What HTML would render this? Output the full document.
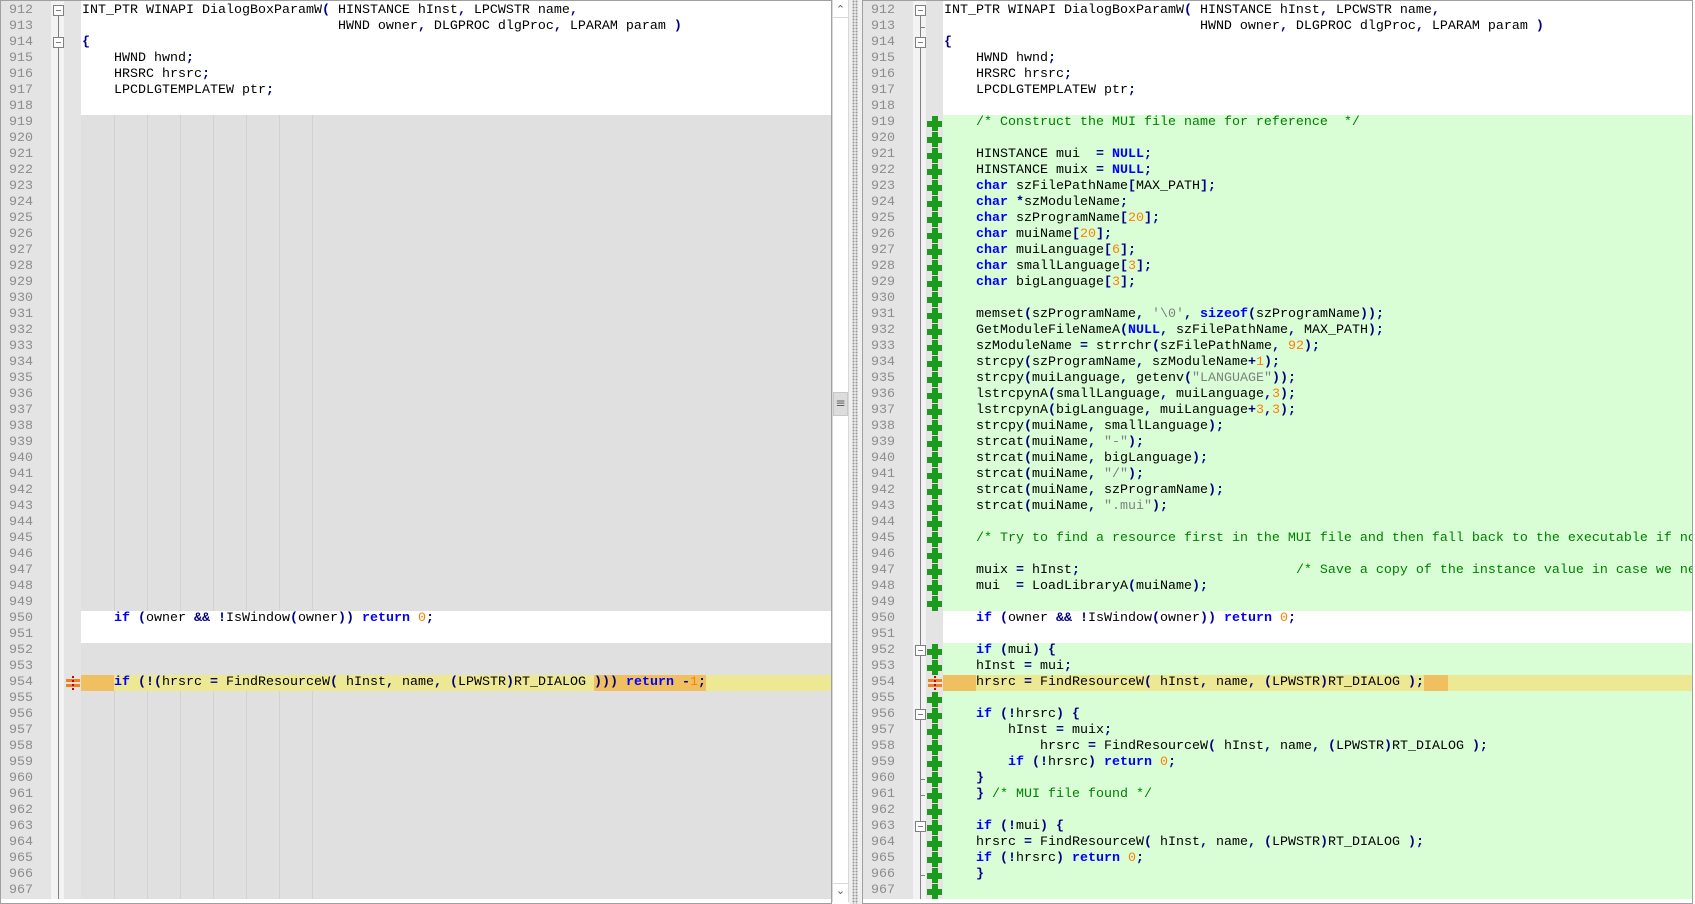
<!DOCTYPE html>
<html><head><meta charset="utf-8"><style>
*{margin:0;padding:0;box-sizing:border-box}
body{width:1695px;height:904px;overflow:hidden;background:#fff;position:relative;font-family:"Liberation Mono",monospace;font-size:13.33px}
.a{position:absolute}
pre{position:absolute;font-family:"Liberation Mono",monospace;font-size:13.33px;line-height:16px;white-space:pre;color:#000}
.num{color:#8c8c8c;text-align:right}
.k{color:#0000ff;font-weight:bold}
.n{color:#ff8000}
.s{color:#808080}
.c{color:#008000}
.o{color:#000080;font-weight:bold}
.p{position:absolute;width:15px;height:15px;background:linear-gradient(#1b9a1b,#1b9a1b) center/15px 6px no-repeat,linear-gradient(#1b9a1b,#1b9a1b) center/6px 15px no-repeat}
.fb{position:absolute;width:11px;height:11px;border:1px solid #808080;background:#fff}
.fb::after{content:"";position:absolute;left:2px;top:4px;width:5px;height:1px;background:#808080}
.guides{background:repeating-linear-gradient(90deg,transparent 0 32px,#c8c8c8 32px 33px)}
.mk{position:absolute;width:14px;height:14px}
.mk::before{content:"";position:absolute;left:0;top:3px;width:14px;height:3px;background:#f08020;box-shadow:0 5px 0 #f08020}
.mk::after{content:"";position:absolute;left:6px;top:0;width:2px;height:14px;background:repeating-linear-gradient(#d00000 0 2px,transparent 2px 4px)}
</style></head><body>

<!-- LEFT PANE -->
<div class="a" style="left:0;top:0;width:832px;height:904px;border:1px solid #a0a0a0;overflow:hidden;background:#fff">
  <div class="a" style="left:0;top:0;width:50px;height:898px;background:#e4e4e4"></div>
  <div class="a" style="left:50px;top:0;width:13px;height:898px;background:#f3f3f3"></div>
  <div class="a" style="left:63px;top:0;width:17px;height:898px;background:#e4e4e4"></div>
  <div class="a" style="left:57px;top:8px;width:1px;height:890px;background:#808080"></div>
  <div class="fb" style="left:52px;top:4px"></div>
  <div class="fb" style="left:52px;top:36px"></div>
  <div class="a" style="left:80px;top:114px;width:752px;height:496px;background:#e0e0e0"></div>
  <div class="a" style="left:80px;top:642px;width:752px;height:32px;background:#e0e0e0"></div>
  <div class="a" style="left:80px;top:674px;width:752px;height:16px;background:#ede894"></div>
  <div class="a" style="left:80px;top:674px;width:33px;height:16px;background:#f0c060"></div>
  <div class="a" style="left:593px;top:674px;width:112px;height:16px;background:#f0c060"></div>
  <div class="a" style="left:80px;top:690px;width:752px;height:208px;background:#e0e0e0"></div>
  <div class="a guides" style="left:81px;top:114px;width:260px;height:496px;opacity:.6"></div>
  <div class="a guides" style="left:81px;top:690px;width:260px;height:208px;opacity:.6"></div>
  <div class="mk" style="left:65px;top:675px"></div>
<pre class="num" style="left:0;top:2px;width:32px">912
913
914
915
916
917
918
919
920
921
922
923
924
925
926
927
928
929
930
931
932
933
934
935
936
937
938
939
940
941
942
943
944
945
946
947
948
949
950
951
952
953
954
955
956
957
958
959
960
961
962
963
964
965
966
967</pre>
<pre style="left:81px;top:2px">INT_PTR WINAPI DialogBoxParamW<span class="o">(</span> HINSTANCE hInst<span class="o">,</span> LPCWSTR name<span class="o">,</span>
                                HWND owner<span class="o">,</span> DLGPROC dlgProc<span class="o">,</span> LPARAM param <span class="o">)</span>
<span class="o">{</span>
    HWND hwnd<span class="o">;</span>
    HRSRC hrsrc<span class="o">;</span>
    LPCDLGTEMPLATEW ptr<span class="o">;</span>
































    <span class="k">if</span> <span class="o">(</span>owner <span class="o">&amp;&amp;</span> <span class="o">!</span>IsWindow<span class="o">(</span>owner<span class="o">))</span> <span class="k">return</span> <span class="n">0</span><span class="o">;</span>



    <span class="k">if</span> <span class="o">(!(</span>hrsrc <span class="o">=</span> FindResourceW<span class="o">(</span> hInst<span class="o">,</span> name<span class="o">,</span> <span class="o">(</span>LPWSTR<span class="o">)</span>RT_DIALOG <span class="o">)))</span> <span class="k">return</span> <span class="o">-</span><span class="n">1</span><span class="o">;</span></pre>
</div>

<!-- vertical scrollbar -->
<div class="a" style="left:832px;top:0;width:17px;height:902px;background:#fff;border-left:1px solid #d8d8d8;border-right:1px solid #d8d8d8">
  <div class="a" style="left:0;top:0;width:15px;height:18px;border-bottom:1px solid #d8d8d8;color:#606060;font-size:11px;text-align:center;line-height:20px;font-family:'DejaVu Sans',sans-serif">&#8963;</div>
  <div class="a" style="left:0;top:392px;width:15px;height:24px;background:#dcdcdc;border:1px solid #c8c8c8;color:#606060;font-size:12px;text-align:center;line-height:21px;font-family:'DejaVu Sans',sans-serif">&#8801;</div>
  <div class="a" style="left:0;top:883px;width:15px;height:18px;border-top:1px solid #d8d8d8;color:#606060;font-size:11px;text-align:center;line-height:14px;font-family:'DejaVu Sans',sans-serif">&#8964;</div>
</div>
<!-- separator -->
<div class="a" style="left:849px;top:0;width:13px;height:904px;background:#f0f0f0"></div>
<div class="a" style="left:852px;top:0;width:6px;height:904px;background:radial-gradient(circle,#9a9a9a 0.9px,transparent 1.2px) 0 0/3px 3px"></div>

<!-- RIGHT PANE -->
<div class="a" style="left:862px;top:0;width:831px;height:904px;border:1px solid #a0a0a0;overflow:hidden;background:#fff">
  <div class="a" style="left:0;top:0;width:50px;height:898px;background:#e4e4e4"></div>
  <div class="a" style="left:50px;top:0;width:13px;height:898px;background:#f3f3f3"></div>
  <div class="a" style="left:63px;top:0;width:17px;height:898px;background:#e4e4e4"></div>
  <div class="a" style="left:57px;top:8px;width:1px;height:890px;background:#808080"></div>
  <div class="a" style="left:80px;top:114px;width:751px;height:496px;background:#d9fdd5"></div>
  <div class="a" style="left:80px;top:642px;width:751px;height:256px;background:#d9fdd5"></div>
  <div class="a" style="left:80px;top:674px;width:751px;height:16px;background:#ede894"></div>
  <div class="a" style="left:80px;top:674px;width:33px;height:16px;background:#f0c060"></div>
  <div class="a" style="left:561px;top:674px;width:24px;height:16px;background:#f0c060"></div>
  <div class="fb" style="left:52px;top:4px"></div>
  <div class="fb" style="left:52px;top:36px"></div>
  <div class="fb" style="left:52px;top:644px"></div>
  <div class="fb" style="left:52px;top:708px"></div>
  <div class="fb" style="left:52px;top:820px"></div>
  <div class="a" style="left:57px;top:26px;width:5px;height:1px;background:#808080"></div>
  <div class="a" style="left:57px;top:778px;width:5px;height:1px;background:#808080"></div>
  <div class="a" style="left:57px;top:794px;width:5px;height:1px;background:#808080"></div>
  <div class="a" style="left:57px;top:874px;width:5px;height:1px;background:#808080"></div>
  <div class="p" style="left:64px;top:115px"></div><div class="p" style="left:64px;top:131px"></div><div class="p" style="left:64px;top:147px"></div><div class="p" style="left:64px;top:163px"></div><div class="p" style="left:64px;top:179px"></div><div class="p" style="left:64px;top:195px"></div><div class="p" style="left:64px;top:211px"></div><div class="p" style="left:64px;top:227px"></div><div class="p" style="left:64px;top:243px"></div><div class="p" style="left:64px;top:259px"></div><div class="p" style="left:64px;top:275px"></div><div class="p" style="left:64px;top:291px"></div><div class="p" style="left:64px;top:307px"></div><div class="p" style="left:64px;top:323px"></div><div class="p" style="left:64px;top:339px"></div><div class="p" style="left:64px;top:355px"></div><div class="p" style="left:64px;top:371px"></div><div class="p" style="left:64px;top:387px"></div><div class="p" style="left:64px;top:403px"></div><div class="p" style="left:64px;top:419px"></div><div class="p" style="left:64px;top:435px"></div><div class="p" style="left:64px;top:451px"></div><div class="p" style="left:64px;top:467px"></div><div class="p" style="left:64px;top:483px"></div><div class="p" style="left:64px;top:499px"></div><div class="p" style="left:64px;top:515px"></div><div class="p" style="left:64px;top:531px"></div><div class="p" style="left:64px;top:547px"></div><div class="p" style="left:64px;top:563px"></div><div class="p" style="left:64px;top:579px"></div><div class="p" style="left:64px;top:595px"></div>
  <div class="p" style="left:64px;top:643px"></div><div class="p" style="left:64px;top:659px"></div><div class="mk" style="left:65px;top:675px"></div><div class="p" style="left:64px;top:691px"></div><div class="p" style="left:64px;top:707px"></div><div class="p" style="left:64px;top:723px"></div><div class="p" style="left:64px;top:739px"></div><div class="p" style="left:64px;top:755px"></div><div class="p" style="left:64px;top:771px"></div><div class="p" style="left:64px;top:787px"></div><div class="p" style="left:64px;top:803px"></div><div class="p" style="left:64px;top:819px"></div><div class="p" style="left:64px;top:835px"></div><div class="p" style="left:64px;top:851px"></div><div class="p" style="left:64px;top:867px"></div><div class="p" style="left:64px;top:883px"></div>
<pre class="num" style="left:0;top:2px;width:32px">912
913
914
915
916
917
918
919
920
921
922
923
924
925
926
927
928
929
930
931
932
933
934
935
936
937
938
939
940
941
942
943
944
945
946
947
948
949
950
951
952
953
954
955
956
957
958
959
960
961
962
963
964
965
966
967</pre>
<pre style="left:81px;top:2px">INT_PTR WINAPI DialogBoxParamW<span class="o">(</span> HINSTANCE hInst<span class="o">,</span> LPCWSTR name<span class="o">,</span>
                                HWND owner<span class="o">,</span> DLGPROC dlgProc<span class="o">,</span> LPARAM param <span class="o">)</span>
<span class="o">{</span>
    HWND hwnd<span class="o">;</span>
    HRSRC hrsrc<span class="o">;</span>
    LPCDLGTEMPLATEW ptr<span class="o">;</span>

    <span class="c">/* Construct the MUI file name for reference  */</span>

    HINSTANCE mui  <span class="o">=</span> <span class="k">NULL</span><span class="o">;</span>
    HINSTANCE muix <span class="o">=</span> <span class="k">NULL</span><span class="o">;</span>
    <span class="k">char</span> szFilePathName<span class="o">[</span>MAX_PATH<span class="o">];</span>
    <span class="k">char</span> <span class="o">*</span>szModuleName<span class="o">;</span>
    <span class="k">char</span> szProgramName<span class="o">[</span><span class="n">20</span><span class="o">];</span>
    <span class="k">char</span> muiName<span class="o">[</span><span class="n">20</span><span class="o">];</span>
    <span class="k">char</span> muiLanguage<span class="o">[</span><span class="n">6</span><span class="o">];</span>
    <span class="k">char</span> smallLanguage<span class="o">[</span><span class="n">3</span><span class="o">];</span>
    <span class="k">char</span> bigLanguage<span class="o">[</span><span class="n">3</span><span class="o">];</span>

    memset<span class="o">(</span>szProgramName<span class="o">,</span> <span class="s">'\0'</span><span class="o">,</span> <span class="k">sizeof</span><span class="o">(</span>szProgramName<span class="o">));</span>
    GetModuleFileNameA<span class="o">(</span><span class="k">NULL</span><span class="o">,</span> szFilePathName<span class="o">,</span> MAX_PATH<span class="o">);</span>
    szModuleName <span class="o">=</span> strrchr<span class="o">(</span>szFilePathName<span class="o">,</span> <span class="n">92</span><span class="o">);</span>
    strcpy<span class="o">(</span>szProgramName<span class="o">,</span> szModuleName<span class="o">+</span><span class="n">1</span><span class="o">);</span>
    strcpy<span class="o">(</span>muiLanguage<span class="o">,</span> getenv<span class="o">(</span><span class="s">"LANGUAGE"</span><span class="o">));</span>
    lstrcpynA<span class="o">(</span>smallLanguage<span class="o">,</span> muiLanguage<span class="o">,</span><span class="n">3</span><span class="o">);</span>
    lstrcpynA<span class="o">(</span>bigLanguage<span class="o">,</span> muiLanguage<span class="o">+</span><span class="n">3</span><span class="o">,</span><span class="n">3</span><span class="o">);</span>
    strcpy<span class="o">(</span>muiName<span class="o">,</span> smallLanguage<span class="o">);</span>
    strcat<span class="o">(</span>muiName<span class="o">,</span> <span class="s">"-"</span><span class="o">);</span>
    strcat<span class="o">(</span>muiName<span class="o">,</span> bigLanguage<span class="o">);</span>
    strcat<span class="o">(</span>muiName<span class="o">,</span> <span class="s">"/"</span><span class="o">);</span>
    strcat<span class="o">(</span>muiName<span class="o">,</span> szProgramName<span class="o">);</span>
    strcat<span class="o">(</span>muiName<span class="o">,</span> <span class="s">".mui"</span><span class="o">);</span>

    <span class="c">/* Try to find a resource first in the MUI file and then fall back to the executable if not */</span>

    muix <span class="o">=</span> hInst<span class="o">;</span>                           <span class="c">/* Save a copy of the instance value in case we need it */</span>
    mui  <span class="o">=</span> LoadLibraryA<span class="o">(</span>muiName<span class="o">);</span>

    <span class="k">if</span> <span class="o">(</span>owner <span class="o">&amp;&amp;</span> <span class="o">!</span>IsWindow<span class="o">(</span>owner<span class="o">))</span> <span class="k">return</span> <span class="n">0</span><span class="o">;</span>

    <span class="k">if</span> <span class="o">(</span>mui<span class="o">)</span> <span class="o">{</span>
    hInst <span class="o">=</span> mui<span class="o">;</span>
    hrsrc <span class="o">=</span> FindResourceW<span class="o">(</span> hInst<span class="o">,</span> name<span class="o">,</span> <span class="o">(</span>LPWSTR<span class="o">)</span>RT_DIALOG <span class="o">);</span>

    <span class="k">if</span> <span class="o">(!</span>hrsrc<span class="o">)</span> <span class="o">{</span>
        hInst <span class="o">=</span> muix<span class="o">;</span>
            hrsrc <span class="o">=</span> FindResourceW<span class="o">(</span> hInst<span class="o">,</span> name<span class="o">,</span> <span class="o">(</span>LPWSTR<span class="o">)</span>RT_DIALOG <span class="o">);</span>
        <span class="k">if</span> <span class="o">(!</span>hrsrc<span class="o">)</span> <span class="k">return</span> <span class="n">0</span><span class="o">;</span>
    <span class="o">}</span>
    <span class="o">}</span> <span class="c">/* MUI file found */</span>

    <span class="k">if</span> <span class="o">(!</span>mui<span class="o">)</span> <span class="o">{</span>
    hrsrc <span class="o">=</span> FindResourceW<span class="o">(</span> hInst<span class="o">,</span> name<span class="o">,</span> <span class="o">(</span>LPWSTR<span class="o">)</span>RT_DIALOG <span class="o">);</span>
    <span class="k">if</span> <span class="o">(!</span>hrsrc<span class="o">)</span> <span class="k">return</span> <span class="n">0</span><span class="o">;</span>
    <span class="o">}</span>
</pre>
</div>
</body></html>
